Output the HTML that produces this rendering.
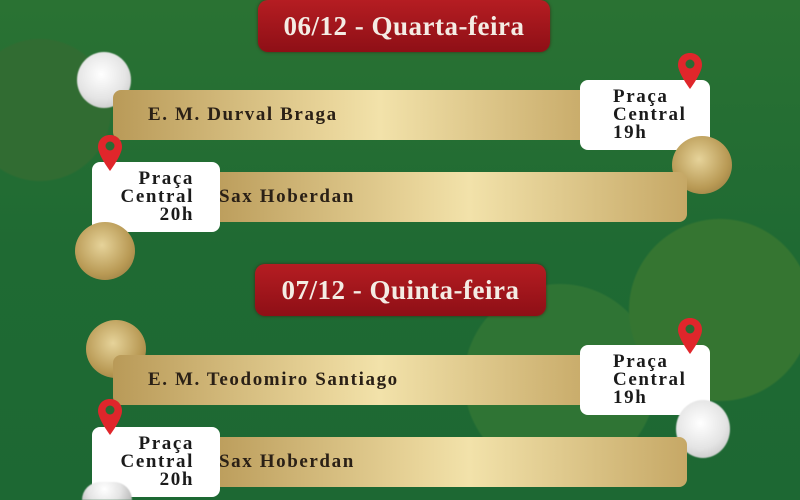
<!DOCTYPE html>
<html style="width:800px;height:500px;overflow:hidden"><head><meta charset="utf-8"><style>
*{margin:0;padding:0;box-sizing:border-box}
body{width:800px;height:500px;overflow:hidden;position:relative;
background:radial-gradient(circle at 720px 310px,#357531 0,#357531 90px,transparent 92px),
radial-gradient(circle at 560px 380px,#2f7434 0,#2f7434 95px,transparent 97px),
radial-gradient(circle at 40px 110px,#316c32 0,#316c32 70px,transparent 72px),
linear-gradient(180deg,#2a7233 0%,#1f6a33 50%,#1d6833 100%);
font-family:"Liberation Serif",serif}
.pill{position:absolute;border-radius:10px;background:linear-gradient(180deg,#b51d22,#8e0f16);color:#f4ece4;font-size:27px;font-weight:bold;text-align:center;line-height:52px;box-shadow:0 0 3px rgba(80,0,0,.6);letter-spacing:0.5px}
.bar{position:absolute;height:50px;border-radius:8px;background:linear-gradient(90deg,#b99a58 0%,#e9d59a 45%,#f2e2aa 55%,#c6a866 100%);font-size:19px;font-weight:bold;letter-spacing:1.6px;color:#2a2016;line-height:50px}
.box{position:absolute;width:130px;height:70px;background:#fff;border-radius:8px;font-weight:bold;font-size:19px;letter-spacing:1.6px;line-height:18px;color:#1b1b1b;padding-top:8px}
.pin{position:absolute;width:26px;height:38px}
.orn{position:absolute;border-radius:50%}
.g{background:radial-gradient(circle at 45% 40%,#e6d39a,#b99a55 60%,#8a7038);}
.w{background:radial-gradient(circle at 45% 40%,#fff,#e4e4e4 55%,#b8b8b8);filter:blur(.6px)}
</style></head><body>
<div class="pill" style="left:258px;top:0;width:292px">06/12 - Quarta-feira</div>
<div class="orn w" style="left:77px;top:52px;width:54px;height:56px"></div>
<div class="bar" style="left:113px;top:90px;width:485px;padding-left:35px">E. M. Durval Braga</div>
<div class="box" style="left:580px;top:80px;padding-left:33px">Praça<br>Central<br>19h</div>
<div class="orn g" style="left:672px;top:136px;width:60px;height:58px"></div>
<div class="bar" style="left:203px;top:172px;width:484px;padding-left:16px">Sax Hoberdan</div>
<div class="box" style="left:92px;top:162px;width:128px;text-align:right;padding-right:26px">Praça<br>Central<br>20h</div>
<div class="orn g" style="left:75px;top:222px;width:60px;height:58px"></div>

<div class="pill" style="left:255px;top:264px;width:291px">07/12 - Quinta-feira</div>
<div class="orn g" style="left:86px;top:320px;width:60px;height:58px"></div>
<div class="bar" style="left:113px;top:355px;width:485px;padding-left:35px">E. M. Teodomiro Santiago</div>
<div class="box" style="left:580px;top:345px;padding-left:33px">Praça<br>Central<br>19h</div>
<div class="orn w" style="left:676px;top:400px;width:54px;height:58px"></div>
<div class="bar" style="left:203px;top:437px;width:484px;padding-left:16px">Sax Hoberdan</div>
<div class="box" style="left:92px;top:427px;width:128px;text-align:right;padding-right:26px">Praça<br>Central<br>20h</div>
<div class="orn w" style="left:82px;top:482px;width:50px;height:18px;border-radius:25px 25px 0 0"></div>

<svg class="pin" style="left:677px;top:52px" viewBox="0 0 26 38"><path d="M13 1C6 1 1 6 1 13c0 8 12 24 12 24s12-16 12-24C25 6 20 1 13 1z" fill="#e0262b"/><circle cx="13" cy="12" r="4.5" fill="#2a6a33"/></svg>
<svg class="pin" style="left:97px;top:134px" viewBox="0 0 26 38"><path d="M13 1C6 1 1 6 1 13c0 8 12 24 12 24s12-16 12-24C25 6 20 1 13 1z" fill="#e0262b"/><circle cx="13" cy="12" r="4.5" fill="#2a6a33"/></svg>
<svg class="pin" style="left:677px;top:317px" viewBox="0 0 26 38"><path d="M13 1C6 1 1 6 1 13c0 8 12 24 12 24s12-16 12-24C25 6 20 1 13 1z" fill="#e0262b"/><circle cx="13" cy="12" r="4.5" fill="#2a6a33"/></svg>
<svg class="pin" style="left:97px;top:398px" viewBox="0 0 26 38"><path d="M13 1C6 1 1 6 1 13c0 8 12 24 12 24s12-16 12-24C25 6 20 1 13 1z" fill="#e0262b"/><circle cx="13" cy="12" r="4.5" fill="#2a6a33"/></svg>
</body></html>
